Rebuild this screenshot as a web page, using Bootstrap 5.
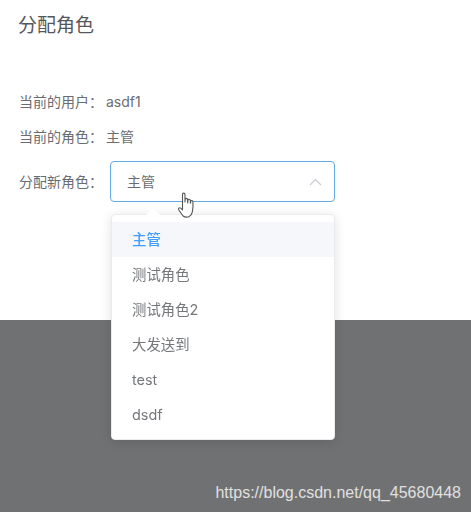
<!DOCTYPE html>
<html lang="zh">
<head>
<meta charset="utf-8">
<title>分配角色</title>
<link href="https://cdn.jsdelivr.net/npm/bootstrap@5.3.0/dist/css/bootstrap.min.css" rel="stylesheet">
<style>
html,body{height:512px;overflow:hidden}
body{font-family:"Inter","Noto Sans CJK SC",sans-serif;background:#fff;color:#6a6c70;font-size:14px}
.sheet{height:320px;padding:14px 19px 0 18px;background:#fff}
.sheet-title{font-size:19px;line-height:24px;font-weight:400;color:#55575b;margin:0 0 54px}
.info-line{height:20px;line-height:20px;margin-bottom:15px;color:#6a6c70;font-size:14px;padding-left:1px}
.colon-mark{font-family:"Noto Sans CJK TC",sans-serif;line-height:1;margin-right:3px}
.assign-row{display:flex;align-items:center;margin-top:-1px}
.assign-label{width:92px;flex:none;font-size:14px;padding-left:1px;white-space:nowrap}
.pick-wrap{position:relative;width:225px}
.pick-box{height:41px;border:1px solid #63a9e6;border-radius:4px;display:flex;align-items:center;justify-content:space-between;padding:0 12px 0 16px;background:#fff;font-size:14px}
.pick-menu.dropdown-menu{display:block;position:absolute;top:53px;left:1px;width:224px;min-width:0;padding:7px 0;margin:0;border:1px solid #e9ebef;border-radius:4px;box-shadow:0 2px 12px rgba(0,0,0,.12);background:#fff;will-change:transform;--bs-dropdown-link-hover-bg:#f5f7fa}
.pick-menu .dropdown-item{height:35px;line-height:35px;padding:0 20px;color:#75777b;font-size:14.4px}
.pick-menu .dropdown-item.current{background:#f5f7fa;color:#409eff;font-weight:500}
.pick-menu::before{content:"";position:absolute;top:-5px;left:36px;width:10px;height:10px;background:#fff;transform:rotate(45deg)}
.hand-cursor{position:absolute;left:67px;top:31px;width:20px;height:27px;z-index:1100}
.backdrop-band{height:192px;background:#707172;display:flex;align-items:flex-end;justify-content:flex-end;padding:0 10px 10px 0}
.mark-url{font-family:"Liberation Sans",sans-serif;font-size:16px;line-height:18px;color:#e0e0e0}
</style>
</head>
<body>
<div class="sheet">
  <h5 class="sheet-title">分配角色</h5>
  <div class="info-line">当前的用户<span class="colon-mark">：</span>asdf1</div>
  <div class="info-line">当前的角色<span class="colon-mark">：</span>主管</div>
  <div class="assign-row">
    <div class="assign-label">分配新角色<span class="colon-mark">：</span></div>
    <div class="pick-wrap">
      <div class="pick-box">
        <span>主管</span>
        <svg width="13" height="8" viewBox="0 0 13 8" fill="none" stroke="#c9ccd2" stroke-width="1.2"><path d="M1 7 6.500 1.500 12 7"/></svg>
      </div>
      <svg class="hand-cursor" viewBox="0 0 20 27" fill="#fff" stroke="#555" stroke-width="1.1" stroke-linejoin="round">
        <path d="M5.500 2.500c0-1.800 2.500-1.800 2.500 0V10l.2-2.500c.2-1.500 2.300-1.500 2.400 0L10.700 11l.3-2.800c.2-1.400 2.200-1.300 2.300.1l.1 3 .4-2c.3-1.200 2-1 2.100.3.2 3 .2 7-.5 10-.5 2.500-1.500 3.900-3 4.800-2 1-4.500.9-6.300-.4C5 22.600 3.500 20.500 1.700 17.800c-.8-1.300.6-2.600 1.900-1.700l1.900 1.700z"/>
      </svg>
      <ul class="dropdown-menu pick-menu list-unstyled">
        <li><a class="dropdown-item current" href="#">主管</a></li>
        <li><a class="dropdown-item" href="#">测试角色</a></li>
        <li><a class="dropdown-item" href="#">测试角色2</a></li>
        <li><a class="dropdown-item" href="#">大发送到</a></li>
        <li><a class="dropdown-item" href="#">test</a></li>
        <li><a class="dropdown-item" href="#">dsdf</a></li>
      </ul>
    </div>
  </div>
</div>
<div class="backdrop-band"><span class="mark-url">https://blog.csdn.net/qq_45680448</span></div>
<script src="https://cdn.jsdelivr.net/npm/bootstrap@5.3.0/dist/js/bootstrap.bundle.min.js"></script>
</body>
</html>
